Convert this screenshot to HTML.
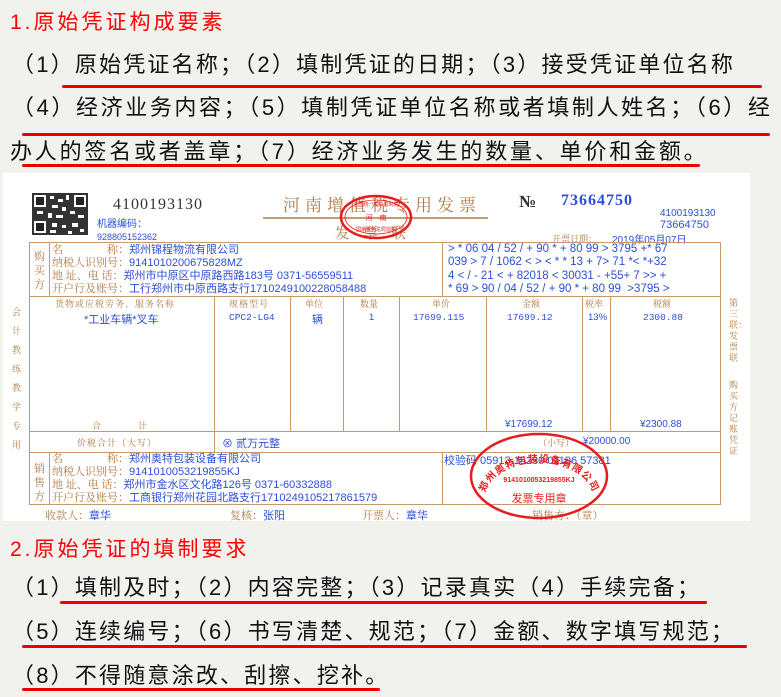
<!DOCTYPE html>
<html><head><meta charset="utf-8"><style>
*{margin:0;padding:0;box-sizing:border-box}
body{width:781px;height:697px;overflow:hidden;background:#f1f1ee;position:relative;font-family:"Liberation Sans","Noto Sans CJK SC",sans-serif}
.a{position:absolute;white-space:nowrap}
.h{color:#f00;font-size:21px;line-height:22px;letter-spacing:3px}
.t{color:#111;font-size:22px;line-height:22px;letter-spacing:2.2px}
.u{position:absolute;height:3px;background:#e00;border-radius:2px}
.inv{position:absolute;left:3px;top:173px;width:747px;height:348px;background:#fff}
.br{color:#b07a44;font-family:"Liberation Serif","Noto Serif CJK SC",serif}
.bl{color:#2b4fd6}
.s{font-size:11px}
.ln{position:absolute;background:#c59a6d}
</style></head><body>
<div class="a h" style="left:10px;top:12px">1.原始凭证构成要素</div>
<div class="a t" style="left:12px;top:54px">（1）原始凭证名称；（2）填制凭证的日期；（3）接受凭证单位名称</div>
<div class="u" style="left:62px;top:85px;width:700px"></div>
<div class="a t" style="left:12px;top:97px;letter-spacing:2.6px">（4）经济业务内容；（5）填制凭证单位名称或者填制人姓名；（6）经</div>
<div class="u" style="left:22px;top:133px;width:748px"></div>
<div class="a t" style="left:10px;top:141px;letter-spacing:2.8px">办人的签名或者盖章；（7）经济业务发生的数量、单价和金额。</div>
<div class="u" style="left:22px;top:164px;width:678px"></div>

<div class="inv"></div>
<svg class="a" style="left:32px;top:193px" width="56" height="42" viewBox="0 0 56 42">
<rect width="56" height="42" fill="#333"/>
<rect x="2" y="2" width="12" height="12" fill="#fff"/><rect x="4" y="4" width="8" height="8" fill="#222"/>
<rect x="42" y="2" width="12" height="12" fill="#fff"/><rect x="44" y="4" width="8" height="8" fill="#222"/>
<rect x="2" y="28" width="12" height="12" fill="#fff"/><rect x="4" y="30" width="8" height="8" fill="#222"/>
<g fill="#fff"><rect x="18" y="3" width="4" height="3"/><rect x="26" y="6" width="5" height="3"/><rect x="34" y="2" width="3" height="5"/><rect x="20" y="12" width="6" height="3"/><rect x="30" y="14" width="4" height="4"/><rect x="5" y="18" width="6" height="3"/><rect x="16" y="20" width="4" height="5"/><rect x="24" y="22" width="7" height="3"/><rect x="38" y="18" width="5" height="3"/><rect x="46" y="22" width="6" height="3"/><rect x="20" y="30" width="5" height="4"/><rect x="30" y="32" width="4" height="3"/><rect x="40" y="30" width="6" height="4"/><rect x="48" y="36" width="4" height="3"/><rect x="36" y="38" width="4" height="3"/><rect x="18" y="37" width="6" height="3"/></g></svg>
<div class="a" style="left:113px;top:196px;font-size:16px;font-family:'Liberation Serif',serif;color:#333;letter-spacing:1px">4100193130</div>
<div class="a bl" style="left:97px;top:219px;font-size:10px;line-height:12px">机器编码：</div>
<div class="a bl" style="left:97px;top:232px;font-size:9px;line-height:10px">928805152362</div>
<div class="a br" style="left:283px;top:191px;font-size:17px;letter-spacing:5px">河南增值税专用发票</div>
<div class="ln" style="left:263px;top:217px;width:225px;height:2px"></div>
<div class="a br" style="left:335px;top:222px;font-size:15px;letter-spacing:13px">发票联</div>
<svg class="a" style="left:338px;top:192px" width="78" height="50"><ellipse cx="38" cy="25" rx="35" ry="21" fill="none" stroke="#e81c1c" stroke-width="2.5"/><ellipse cx="38" cy="25" rx="31" ry="17" fill="none" stroke="#e81c1c" stroke-width="0.8"/><text x="38" y="28" font-size="7" fill="#e81c1c" text-anchor="middle">河　南</text><text x="38" y="14" font-size="5" fill="#e81c1c" text-anchor="middle">全国统一发票监制章</text><text x="38" y="39" font-size="5" fill="#e81c1c" text-anchor="middle">国家税务总局监制</text></svg>
<div class="a" style="left:519px;top:192px;font-size:17px;font-weight:bold;font-family:'Liberation Serif',serif;color:#333">№</div>
<div class="a bl" style="left:561px;top:192px;font-size:16px;font-weight:bold;font-family:'Liberation Serif',serif;letter-spacing:1px">73664750</div>
<div class="a bl" style="left:660px;top:208px;font-size:10px">4100193130</div>
<div class="a bl" style="left:660px;top:219px;font-size:11px">73664750</div>
<div class="a br" style="left:552px;top:232px;font-size:9px">开票日期：</div>
<div class="a bl" style="left:612px;top:231px;font-size:10px">2019年05月07日</div>

<div class="ln" style="left:29px;top:242px;width:692px;height:1px"></div>
<div class="ln" style="left:29px;top:242px;width:1px;height:262px"></div>
<div class="ln" style="left:720px;top:242px;width:1px;height:262px"></div>
<div class="ln" style="left:49px;top:242px;width:1px;height:55px"></div>
<div class="ln" style="left:49px;top:452px;width:1px;height:52px"></div>
<div class="ln" style="left:442px;top:242px;width:1px;height:55px"></div>
<div class="ln" style="left:442px;top:452px;width:1px;height:52px"></div>
<div class="ln" style="left:29px;top:296px;width:692px;height:1px"></div>
<div class="ln" style="left:29px;top:431px;width:692px;height:1px"></div>
<div class="ln" style="left:29px;top:452px;width:692px;height:1px"></div>
<div class="ln" style="left:29px;top:504px;width:692px;height:1px"></div>
<div class="ln" style="left:214px;top:296px;width:1px;height:156px"></div>
<div class="ln" style="left:290px;top:296px;width:1px;height:135px"></div>
<div class="ln" style="left:343px;top:296px;width:1px;height:135px"></div>
<div class="ln" style="left:399px;top:296px;width:1px;height:135px"></div>
<div class="ln" style="left:486px;top:296px;width:1px;height:135px"></div>
<div class="ln" style="left:582px;top:296px;width:1px;height:135px"></div>
<div class="ln" style="left:610px;top:296px;width:1px;height:135px"></div>

<div class="a br s" style="left:34px;top:250px;line-height:14px;white-space:normal;width:12px">购买方</div>
<div class="a br s" style="left:34px;top:462px;line-height:14px;white-space:normal;width:12px">销售方</div>
<div class="a br" style="left:12px;top:303px;font-size:9px;line-height:19px;white-space:normal;width:10px">会计教练教学专用</div>
<div class="a br" style="left:729px;top:298px;font-size:9px;line-height:11px;white-space:normal;width:10px">第三联：发票联</div>
<div class="a br" style="left:729px;top:380px;font-size:9px;line-height:11px;white-space:normal;width:10px">购买方记账凭证</div>

<div class="a s" style="left:52px;top:244px;line-height:13px">
<div><span class="br">名　　　　称：</span><span class="bl">郑州锦程物流有限公司</span></div>
<div><span class="br">纳税人识别号：</span><span class="bl">9141010200675828MZ</span></div>
<div><span class="br">地 址、电 话：</span><span class="bl">郑州市中原区中原路西路183号 0371-56559511</span></div>
<div><span class="br">开户行及账号：</span><span class="bl">工行郑州市中原西路支行1710249100228058488</span></div>
</div>
<div class="a bl" style="left:448px;top:243px;font-size:11.5px;line-height:13.3px">
<div>&gt; * 06 04 / 52 / + 90 * + 80 99 &gt; 3795 +* 67</div>
<div>039 &gt; 7 / 1062 &lt; &gt; &lt; * * 13 + 7&gt; 71 *&lt; *+32</div>
<div>4 &lt; / - 21 &lt; + 82018 &lt; 30031 - +55+ 7 &gt;&gt; +</div>
<div>* 69 &gt; 90 / 04 / 52 / + 90 * + 80 99 &nbsp;&gt;3795 &gt;</div>
</div>

<div class="a br" style="left:55px;top:297px;font-size:9px;letter-spacing:1px">货物或应税劳务、服务名称</div>
<div class="a br" style="left:229px;top:297px;font-size:9px;letter-spacing:1px">规格型号</div>
<div class="a br" style="left:305px;top:297px;font-size:9px">单位</div>
<div class="a br" style="left:360px;top:297px;font-size:9px">数量</div>
<div class="a br" style="left:432px;top:297px;font-size:9px">单价</div>
<div class="a br" style="left:522px;top:297px;font-size:9px">金额</div>
<div class="a br" style="left:585px;top:297px;font-size:9px">税率</div>
<div class="a br" style="left:653px;top:297px;font-size:9px">税额</div>
<div class="a bl s" style="left:84px;top:311px">*工业车辆*叉车</div>
<div class="a bl" style="left:229px;top:312px;font-size:9.5px;font-family:'Liberation Mono',monospace">CPC2-LG4</div>
<div class="a bl s" style="left:312px;top:311px">辆</div>
<div class="a bl" style="left:369px;top:312px;font-size:9.5px">1</div>
<div class="a bl" style="left:413px;top:312px;font-size:9.5px;font-family:'Liberation Mono',monospace">17699.115</div>
<div class="a bl" style="left:507px;top:312px;font-size:9.5px;font-family:'Liberation Mono',monospace">17699.12</div>
<div class="a bl" style="left:588px;top:312px;font-size:9.5px">13%</div>
<div class="a bl" style="left:643px;top:312px;font-size:9.5px;font-family:'Liberation Mono',monospace">2300.88</div>
<div class="a br" style="left:92px;top:419px;font-size:9px;letter-spacing:37px">合计</div>
<div class="a bl" style="left:505px;top:419px;font-size:10px">¥17699.12</div>
<div class="a bl" style="left:640px;top:419px;font-size:10px">¥2300.88</div>
<div class="a br" style="left:77px;top:436px;font-size:9px;letter-spacing:1px">价税合计（大写）</div>
<div class="a bl s" style="left:222px;top:435px">⊗ 贰万元整</div>
<div class="a br" style="left:538px;top:436px;font-size:9px">（小写）</div>
<div class="a bl" style="left:583px;top:436px;font-size:10px">¥20000.00</div>

<div class="a s" style="left:52px;top:453px;line-height:13px">
<div><span class="br">名　　　　称：</span><span class="bl">郑州奥特包装设备有限公司</span></div>
<div><span class="br">纳税人识别号：</span><span class="bl">9141010053219855KJ</span></div>
<div><span class="br">地 址、电 话：</span><span class="bl">郑州市金水区文化路126号 0371-60332888</span></div>
<div><span class="br">开户行及账号：</span><span class="bl">工商银行郑州花园北路支行1710249105217861579</span></div>
</div>
<div class="a bl s" style="left:444px;top:452px">校验码 05913 15230 01196 57381</div>
<div class="a s" style="left:45px;top:507px"><span class="br">收款人：</span><span class="bl">章华</span></div>
<div class="a s" style="left:230px;top:507px"><span class="br">复核：</span><span class="bl">张阳</span></div>
<div class="a s" style="left:362px;top:507px"><span class="br">开票人：</span><span class="bl">章华</span></div>
<div class="a br s" style="left:532px;top:507px">销售方：（章）</div>
<svg class="a" style="left:468px;top:430px" width="142" height="92"><ellipse cx="71" cy="46" rx="68" ry="42" fill="none" stroke="#e81c1c" stroke-width="2.5"/><path id="arc" d="M18 60 A55 38 0 0 1 124 60" fill="none"/><text font-size="10" fill="#e81c1c" font-weight="bold" letter-spacing="1"><textPath href="#arc" startOffset="50%" text-anchor="middle">郑州奥特包装设备有限公司</textPath></text><text x="71" y="52" font-size="7" fill="#e81c1c" text-anchor="middle" font-weight="bold">9141010053219855KJ</text><text x="71" y="72" font-size="11" fill="#e81c1c" text-anchor="middle">发票专用章</text></svg>

<div class="a h" style="left:10px;top:539px">2.原始凭证的填制要求</div>
<div class="a t" style="left:12px;top:577px">（1）填制及时；（2）内容完整；（3）记录真实（4）手续完备；</div>
<div class="u" style="left:60px;top:601px;width:647px"></div>
<div class="a t" style="left:12px;top:621px">（5）连续编号；（6）书写清楚、规范；（7）金额、数字填写规范；</div>
<div class="u" style="left:22px;top:645px;width:725px"></div>
<div class="a t" style="left:12px;top:665px">（8）不得随意涂改、刮擦、挖补。</div>
<div class="u" style="left:22px;top:688px;width:358px"></div>
</body></html>
